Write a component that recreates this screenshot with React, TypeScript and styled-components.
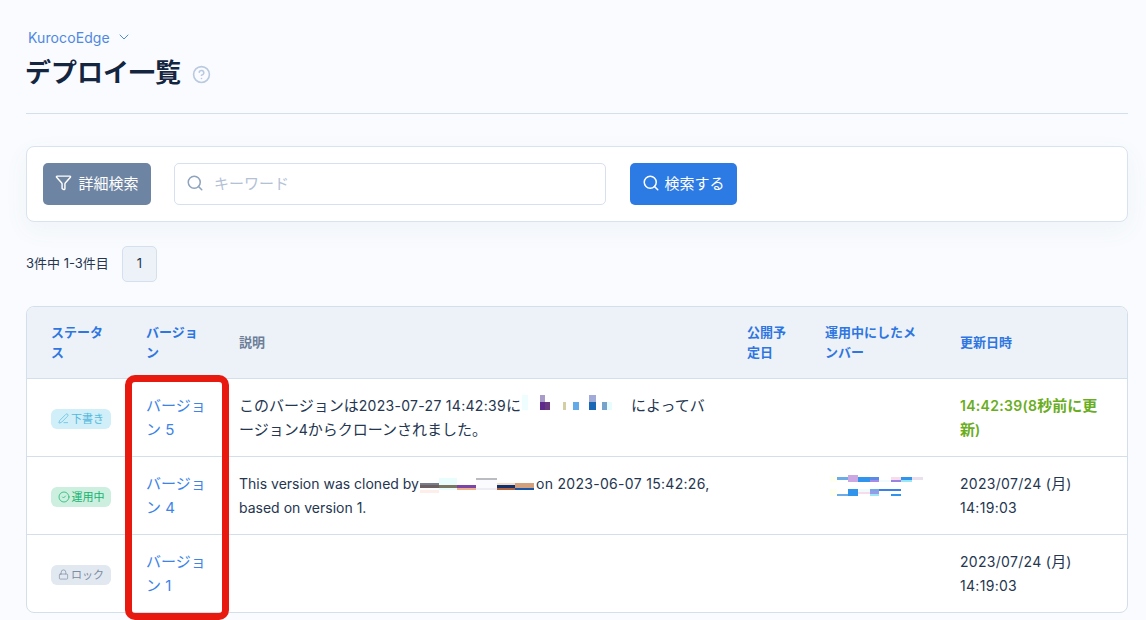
import React from "react";
import styled, { createGlobalStyle } from "styled-components";
import { ChevronDown, CircleHelp, Filter, Search, PenLine, CircleCheck, Lock } from "lucide-react";

const FONT = `Inter, "Noto Sans CJK JP", sans-serif`;

const Global = createGlobalStyle`
  html, body { margin: 0; padding: 0; }
  body { background: #f9fbfe; font-family: ${FONT}; color: #1a2b42; overflow: hidden; }
  * { box-sizing: border-box; }
`;

const Page = styled.div`
  position: relative;
  width: 1146px;
  height: 620px;
  overflow: hidden;
  padding: 28px 18px 0 26px;
`;
const Breadcrumb = styled.div`
  display: flex;
  align-items: center;
  gap: 6px;
  height: 18px;
  padding-left: 2px;
  font-size: 14px;
  letter-spacing: 0.1px;
  color: #4f88e2;
`;
const TitleRow = styled.div`
  display: flex;
  align-items: center;
  gap: 11px;
  height: 36px;
  margin-top: 9px;
  margin-left: -1px;
`;
const Title = styled.h1`
  margin: 0;
  font-size: 26px;
  line-height: 36px;
  font-weight: 700;
  color: #14253f;
`;
const HelpIcon = styled(CircleHelp)`
  margin-top: 3px;
  color: #b9c9e0;
`;
const Divider = styled.hr`
  margin: 22px 0 32px;
  border: 0;
  border-top: 1px solid #d3dfeb;
`;
const SearchCard = styled.section`
  display: flex;
  align-items: center;
  height: 76px;
  padding: 0 16px;
  background: #fff;
  border: 1px solid #d9e3f0;
  border-radius: 8px;
  box-shadow: 0 8px 24px rgba(110, 130, 160, 0.06);
`;
const Button = styled.button<{ $bg: string; $w: number; $gap: number }>`
  display: flex;
  align-items: center;
  justify-content: center;
  gap: ${(p) => p.$gap}px;
  width: ${(p) => p.$w}px;
  height: 42px;
  padding: 0 0 3px;
  border: 0;
  border-radius: 5px;
  background: ${(p) => p.$bg};
  color: #fff;
  font-family: ${FONT};
  font-size: 15px;
`;
const InputBox = styled.div`
  display: flex;
  align-items: center;
  gap: 10px;
  width: 432px;
  height: 42px;
  margin: 0 24px 0 23px;
  padding: 0 11px 3px;
  background: #fff;
  border: 1px solid #d7e0ee;
  border-radius: 5px;
  color: #8fa3bd;
`;
const Placeholder = styled.span`
  font-size: 15px;
  color: #b3c1d6;
`;
const Pager = styled.div`
  display: flex;
  align-items: center;
  gap: 13px;
  height: 36px;
  margin: 24px 0;
  font-size: 13px;
  color: #253650;
`;
const Count = styled.span`
  margin-bottom: 3px;
`;
const PageNum = styled.span`
  display: flex;
  align-items: center;
  justify-content: center;
  width: 35px;
  height: 36px;
  padding-bottom: 2px;
  background: #edf2f9;
  border: 1px solid #d5e0ee;
  border-radius: 5px;
  font-size: 13px;
`;
const TableCard = styled.div`
  background: #fff;
  border: 1px solid #d3dfeb;
  border-radius: 8px;
  overflow: hidden;
`;
const Table = styled.table`
  width: 100%;
  table-layout: fixed;
  border-collapse: collapse;
`;
const HeadRow = styled.tr`
  height: 71px;
  background: #edf2f9;
`;
const Th = styled.th<{ $w: number; $pl: number; $pr: number }>`
  width: ${(p) => p.$w}px;
  padding: 0 ${(p) => p.$pr}px 0 ${(p) => p.$pl}px;
  text-align: left;
  vertical-align: middle;
  font-size: 13px;
  line-height: 20px;
  font-weight: 600;
  color: #2f76e0;
`;
const GreyTh = styled(Th)`
  color: #6d7f98;
`;
const Row = styled.tr`
  height: 78px;
  border-top: 1px solid #d3dfeb;
`;
const Td = styled.td<{ $pl: number; $pr: number }>`
  padding: 2px ${(p) => p.$pr}px 0 ${(p) => p.$pl}px;
  vertical-align: middle;
  font-size: 15px;
  line-height: 24px;
  color: #253650;
`;
const Latin = styled.span`
  font-size: 14px;
`;
const Digits = styled(Latin)`
  letter-spacing: 0.3px;
`;
const Badge = styled.span<{ $bg: string; $fg: string }>`
  display: flex;
  align-items: center;
  justify-content: center;
  gap: 2px;
  width: 60px;
  height: 20px;
  margin-top: 1px;
  border-radius: 6px;
  background: ${(p) => p.$bg};
  color: ${(p) => p.$fg};
  font-size: 11px;
  white-space: nowrap;
`;
const VersionLink = styled.a`
  color: #3d84e8;
`;
const Recent = styled.span`
  color: #6aad1e;
  font-weight: 600;
`;
const InlineMosaic = styled.svg<{ $margin: string; $block?: boolean }>`
  display: ${(p) => (p.$block ? "block" : "inline-block")};
  vertical-align: top;
  margin: ${(p) => p.$margin};
`;
const RedFrame = styled.div`
  position: absolute;
  left: 125px;
  top: 375px;
  width: 104px;
  height: 245px;
  border: 7px solid #e8190e;
  border-radius: 10px;
`;

type Cell = [number, number, number, number, string];
const Mosaic = ({ w, h, cells, margin, block }: { w: number; h: number; cells: Cell[]; margin: string; block?: boolean }) => (
  <InlineMosaic width={w} height={h} viewBox={`0 0 ${w} ${h}`} $margin={margin} $block={block}>
    {cells.map(([x, y, cw, ch, c], i) => (
      <rect key={i} x={x} y={y} width={cw} height={ch} fill={c} />
    ))}
  </InlineMosaic>
);

const mosaicA: Cell[] = [
  [0, 0, 6, 15, "#eefdfd"],
  [18, 0, 5, 7, "#a99cc8"],
  [18, 7, 5, 8, "#5e2a8c"],
  [23, 7, 5, 8, "#693a80"],
  [41, 7, 3, 8, "#d3cea3"],
  [51, 7, 6, 8, "#62abe8"],
  [67, 0, 7, 7, "#a0abd8"],
  [67, 7, 7, 8, "#1a67b5"],
  [80, 7, 5, 8, "#76a3cb"],
  [85, 7, 5, 8, "#e8fbfd"],
];
const mosaicB: Cell[] = [
  [0, 5, 19, 2, "#787f8b"],
  [0, 7, 19, 3, "#6c6060"],
  [0, 12, 19, 3, "#fdeeea"],
  [19, 0, 18, 7, "#e8fdfc"],
  [19, 7, 18, 3, "#7b7660"],
  [19, 10, 18, 2, "#e8fdfc"],
  [37, 7, 19, 3, "#7b45a5"],
  [37, 10, 19, 2, "#eeb08c"],
  [56, 0, 21, 2, "#bbbcc2"],
  [56, 2, 21, 8, "#fbfbfd"],
  [56, 10, 21, 2, "#eeedf5"],
  [77, 5, 18, 2, "#f5dcc4"],
  [77, 7, 18, 3, "#12306e"],
  [77, 10, 18, 2, "#b0623c"],
  [95, 5, 19, 5, "#d2a07c"],
  [95, 10, 19, 2, "#1b55a5"],
];
const mosaicC: Cell[] = [
  [0, 1, 7, 6, "#fffff0"],
  [7, 2, 11, 3, "#6cabe6"],
  [18, 0, 10, 7, "#cba8e2"],
  [28, 2, 12, 5, "#3093ec"],
  [40, 2, 9, 3, "#5a8ae6"],
  [40, 5, 9, 2, "#a58ae6"],
  [49, 5, 12, 2, "#effbfd"],
  [61, 2, 10, 3, "#f8dcec"],
  [61, 5, 10, 2, "#9a82e0"],
  [71, 2, 11, 3, "#3093ec"],
  [71, 5, 11, 2, "#9be6f5"],
  [82, 2, 11, 3, "#eadfec"],
  [0, 14, 7, 7, "#fffff0"],
  [7, 19, 11, 2, "#6cabe6"],
  [18, 14, 10, 7, "#3093ec"],
  [28, 14, 12, 3, "#effbfd"],
  [28, 17, 12, 2, "#f8dcec"],
  [40, 14, 9, 2, "#6cabe6"],
  [40, 16, 9, 3, "#9a9ae6"],
  [40, 19, 9, 2, "#9be6f5"],
  [49, 14, 22, 2, "#3a80e6"],
  [61, 19, 10, 2, "#3093ec"],
];

export default function App() {
  return (
    <Page>
      <Global />
      <Breadcrumb>
        KurocoEdge <ChevronDown size={16} strokeWidth={1.5} />
      </Breadcrumb>
      <TitleRow>
        <Title>デプロイ一覧</Title>
        <HelpIcon size={19} strokeWidth={2} />
      </TitleRow>
      <Divider />
      <SearchCard>
        <Button $bg="#6e84a3" $w={108} $gap={6}>
          <Filter size={17} strokeWidth={2} />
          詳細検索
        </Button>
        <InputBox>
          <Search size={18} strokeWidth={2} />
          <Placeholder>キーワード</Placeholder>
        </InputBox>
        <Button $bg="#2c7be5" $w={107} $gap={4}>
          <Search size={18} strokeWidth={2} />
          検索する
        </Button>
      </SearchCard>
      <Pager>
        <Count>3件中 1-3件目</Count>
        <PageNum>1</PageNum>
      </Pager>
      <TableCard>
        <Table>
          <thead>
            <HeadRow>
              <Th $w={95} $pl={24} $pr={12}>ステータス</Th>
              <Th $w={93} $pl={24} $pr={12}>バージョン</Th>
              <GreyTh $w={520} $pl={24} $pr={12}>説明</GreyTh>
              <Th $w={78} $pl={12} $pr={22}>公開予定日</Th>
              <Th $w={135} $pl={12} $pr={22}>運用中にしたメンバー</Th>
              <Th $w={179} $pl={12} $pr={24}>更新日時</Th>
            </HeadRow>
          </thead>
          <tbody>
            <Row>
              <Td $pl={24} $pr={12}>
                <Badge $bg="#d0eff8" $fg="#55b8dc">
                  <PenLine size={11} strokeWidth={1.5} />下書き
                </Badge>
              </Td>
              <Td $pl={24} $pr={8}><VersionLink>バージョン 5</VersionLink></Td>
              <Td $pl={24} $pr={20}>
                このバージョンは<Digits>2023-07-27 14:42:39</Digits>に
                <Mosaic w={90} h={15} cells={mosaicA} margin="1px 19px 0 1px" />
                によってバージョン<Latin>4</Latin>からクローンされました。
              </Td>
              <Td $pl={12} $pr={12} />
              <Td $pl={12} $pr={12} />
              <Td $pl={12} $pr={24}><Recent><Digits>14:42:39(8</Digits>秒前に更新<Latin>)</Latin></Recent></Td>
            </Row>
            <Row>
              <Td $pl={24} $pr={12}>
                <Badge $bg="#ccefdf" $fg="#16b370">
                  <CircleCheck size={12} strokeWidth={1.5} />運用中
                </Badge>
              </Td>
              <Td $pl={24} $pr={8}><VersionLink>バージョン 4</VersionLink></Td>
              <Td $pl={24} $pr={20}>
                <Latin>
                  This version was cloned by
                  <Mosaic w={114} h={15} cells={mosaicB} margin="6px 2px 0 1px" />
                  <Digits>on 2023-06-07 15:42:26,</Digits> based on version 1.
                </Latin>
              </Td>
              <Td $pl={12} $pr={12} />
              <Td $pl={12} $pr={12}><Mosaic w={93} h={21} cells={mosaicC} margin="0 0 22px 5px" block /></Td>
              <Td $pl={12} $pr={24}><Digits>2023/07/24 (</Digits>月<Digits>) 14:19:03</Digits></Td>
            </Row>
            <Row>
              <Td $pl={24} $pr={12}>
                <Badge $bg="#e2e8f0" $fg="#7c8ca3">
                  <Lock size={11} strokeWidth={1.5} />ロック
                </Badge>
              </Td>
              <Td $pl={24} $pr={8}><VersionLink>バージョン 1</VersionLink></Td>
              <Td $pl={24} $pr={20} />
              <Td $pl={12} $pr={12} />
              <Td $pl={12} $pr={12} />
              <Td $pl={12} $pr={24}><Digits>2023/07/24 (</Digits>月<Digits>) 14:19:03</Digits></Td>
            </Row>
          </tbody>
        </Table>
      </TableCard>
      <RedFrame />
    </Page>
  );
}
